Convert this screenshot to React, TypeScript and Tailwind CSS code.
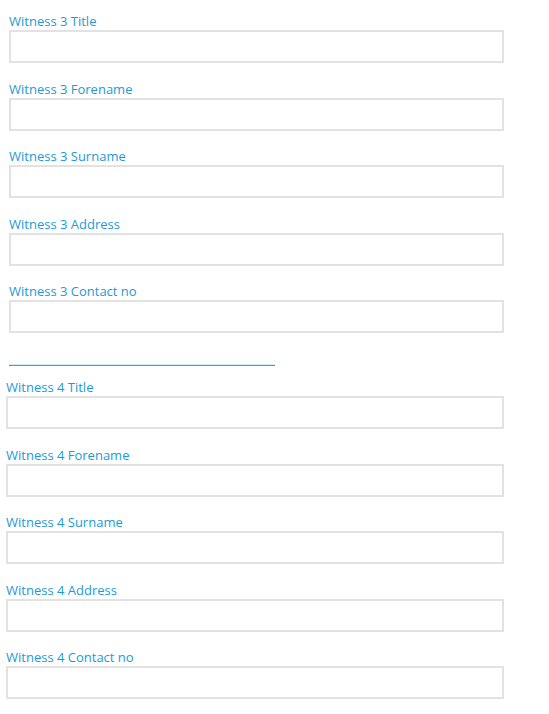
const fields = ["Title", "Forename", "Surname", "Address", "Contact no"];
// alternating gaps give the 67.5px rhythm of the original without half pixels
const gaps = ["mb-[17px]", "mb-[16px]", "mb-[17px]", "mb-[16px]", "mb-0"];

function Field({ label, className }: { label: string; className: string }) {
  return (
    <div className={className}>
      <label className="block text-[13px] leading-[18px] text-[#1d9ad6]">{label}</label>
      <input
        type="text"
        className="block h-[33px] w-full border-2 border-[#e2e2e2] bg-white outline-none"
      />
    </div>
  );
}

export default function App() {
  return (
    <div
      className="min-h-screen bg-white pt-3"
      style={{ fontFamily: '"Open Sans", "Noto Sans", sans-serif' }}
    >
      {/* Witness 3 */}
      <div className="ml-[9px] w-[495px]">
        {fields.map((f, i) => (
          <Field key={f} label={`Witness 3 ${f}`} className={gaps[i]} />
        ))}
      </div>

      {/* divider */}
      <div className="ml-[9px] mt-[31px] mb-[12px] h-[2px] w-[266px] border-t border-[#cfeaf7] bg-[#27aade]" />

      {/* Witness 4 */}
      <div className="ml-[6px] w-[498px]">
        {fields.map((f, i) => (
          <Field key={f} label={`Witness 4 ${f}`} className={gaps[i]} />
        ))}
      </div>
    </div>
  );
}
